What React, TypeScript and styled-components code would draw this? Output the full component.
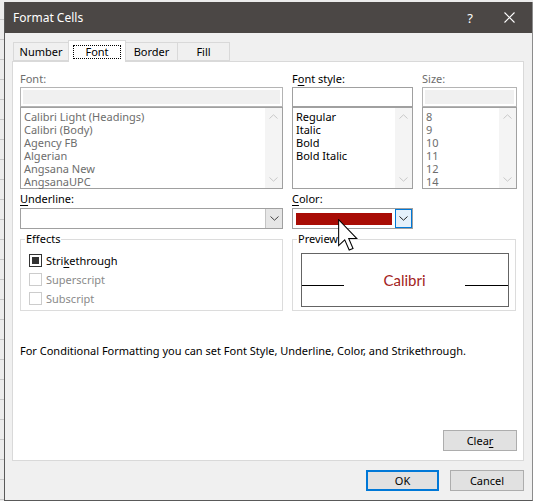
import React from 'react';
import styled, { createGlobalStyle } from 'styled-components';

const GlobalStyle = createGlobalStyle`
  html, body {
    margin: 0;
    padding: 0;
  }
  body {
    width: 533px;
    height: 501px;
    overflow: hidden;
    background-color: #ececec;
    background-image: repeating-linear-gradient(to bottom, transparent 0, transparent 19px, #c8c8c8 19px, #c8c8c8 20px);
    font-family: "Noto Sans", "Open Sans", sans-serif;
    font-size: 11px;
    color: #000;
  }
`;

const Page = styled.div`
  position: relative;
  width: 533px;
  height: 501px;
  padding-top: 2px;
  box-sizing: border-box;
`;

const Dialog = styled.div`
  margin-left: 4px;
  width: 529px;
  height: 499px;
  box-sizing: border-box;
  border-left: 1px solid #595959;
  border-bottom: 1px solid #595959;
  border-right: 1px solid #8c8c8c;
  background: #f0f0f0;
  display: flex;
  flex-direction: column;
`;

const TitleBar = styled.div`
  height: 31px;
  flex-shrink: 0;
  background: #4b4745;
  color: #fff;
  display: flex;
  align-items: center;
  padding-left: 8px;
  font-size: 12px;
`;

const Title = styled.div`
  flex: 1;
`;

const TitleButton = styled.div<{ $w: number }>`
  width: ${(p) => p.$w}px;
  height: 31px;
  display: flex;
  align-items: center;
  justify-content: center;
  font-size: 13px;
`;

const Body = styled.div`
  flex: 1;
  display: flex;
  flex-direction: column;
  padding: 7px 8px 0 7px;
`;

const TabRow = styled.div`
  height: 21px;
  display: flex;
  align-items: flex-end;
  padding-left: 1px;
  position: relative;
  z-index: 1;
`;

const Tab = styled.div<{ $w: number; $active?: boolean }>`
  width: ${(p) => p.$w}px;
  height: ${(p) => (p.$active ? 22 : 19)}px;
  box-sizing: border-box;
  margin-left: -1px;
  margin-bottom: ${(p) => (p.$active ? -1 : 0)}px;
  border: 1px solid #d9d9d9;
  border-bottom: ${(p) => (p.$active ? 'none' : '1px solid #d9d9d9')};
  background: ${(p) => (p.$active ? '#fff' : '#f0f0f0')};
  display: flex;
  align-items: ${(p) => (p.$active ? 'flex-start' : 'center')};
  justify-content: center;
  padding-top: ${(p) => (p.$active ? 4 : 0)}px;
  &:first-child {
    margin-left: 0;
  }
`;

const FocusText = styled.span`
  border: 1px dotted #000;
  padding: 0 11px;
  line-height: 12px;
`;

const Panel = styled.div`
  height: 400px;
  box-sizing: border-box;
  border: 1px solid #d9d9d9;
  background: #fff;
  padding: 8px 6px 9px 7px;
  display: flex;
  flex-direction: column;
`;

const FieldGrid = styled.div`
  display: grid;
  grid-template-columns: 263px 121px 95px;
  column-gap: 9px;
`;

const Field = styled.div`
  display: flex;
  flex-direction: column;
`;

const Label = styled.div<{ $disabled?: boolean; $h?: number }>`
  height: ${(p) => p.$h ?? 17}px;
  line-height: ${(p) => p.$h ?? 17}px;
  color: ${(p) => (p.$disabled ? '#6d6d6d' : '#000')};
  white-space: nowrap;
`;

const Key = styled.span`
  text-decoration: underline;
  text-underline-offset: 2px;
`;

const TextBox = styled.div<{ $disabled?: boolean }>`
  height: 20px;
  box-sizing: border-box;
  border: 1px solid ${(p) => (p.$disabled ? '#b4b4b4' : '#a0a0a0')};
  background: ${(p) => (p.$disabled ? '#f0f0f0' : '#fff')};
  box-shadow: inset 0 0 0 2px #fff;
`;

const ListBox = styled.div`
  height: 82px;
  box-sizing: border-box;
  border: 1px solid #a0a0a0;
  display: flex;
`;

const ListItems = styled.div<{ $disabled?: boolean }>`
  flex: 1;
  padding: 2px 0 0 3px;
  color: ${(p) => (p.$disabled ? '#6d6d6d' : '#000')};
`;

const ListItem = styled.div`
  height: 13px;
  line-height: 13px;
  white-space: nowrap;
`;

const ScrollBar = styled.div`
  width: 17px;
  background: #f4f4f4;
  display: flex;
  flex-direction: column;
  justify-content: space-between;
  align-items: center;
  padding: 6px 0;
`;

const DropDown = styled.div`
  height: 21px;
  box-sizing: border-box;
  border: 1px solid #a0a0a0;
  background: #fff;
  display: flex;
  align-items: stretch;
`;

const DropValue = styled.div`
  flex: 1;
  display: flex;
  align-items: center;
  padding: 0 3px;
`;

const Swatch = styled.div<{ $color: string }>`
  flex: 1;
  height: 12px;
  background: ${(p) => p.$color};
`;

const DropButton = styled.div<{ $hover?: boolean }>`
  width: 17px;
  box-sizing: border-box;
  background: ${(p) => (p.$hover ? '#e5f1fb' : '#e6e6e6')};
  border: ${(p) => (p.$hover ? '1px solid #0078d7' : 'none')};
  border-left: 1px solid ${(p) => (p.$hover ? '#0078d7' : '#c4c4c4')};
  display: flex;
  align-items: center;
  justify-content: center;
`;

const GroupRow = styled.div`
  display: grid;
  grid-template-columns: 263px 224px;
  column-gap: 9px;
  margin-top: 10px;
`;

const Group = styled.div`
  position: relative;
  height: 72px;
  box-sizing: border-box;
  border: 1px solid #dcdcdc;
`;

const GroupTitle = styled.div`
  position: absolute;
  top: -9px;
  left: 4px;
  padding: 0 1px;
  background: #fff;
  line-height: 16px;
`;

const CheckList = styled.div`
  padding: 11px 0 0 8px;
`;

const CheckRow = styled.div<{ $disabled?: boolean }>`
  height: 19px;
  display: flex;
  align-items: center;
  gap: 4px;
  color: ${(p) => (p.$disabled ? '#8a8a8a' : '#000')};
`;

const CheckBox = styled.div<{ $checked?: boolean; $disabled?: boolean }>`
  width: 13px;
  height: 13px;
  box-sizing: border-box;
  border: 1px solid ${(p) => (p.$disabled ? '#cccccc' : '#333')};
  background: #fff;
  display: flex;
  align-items: center;
  justify-content: center;
  &::after {
    content: '';
    display: ${(p) => (p.$checked ? 'block' : 'none')};
    width: 7px;
    height: 7px;
    background: #333;
  }
`;

const PreviewArea = styled.div`
  padding: 13px 0 0 8px;
`;

const PreviewBox = styled.div`
  width: 208px;
  height: 54px;
  box-sizing: border-box;
  border: 1px solid #646464;
  display: flex;
  align-items: center;
  justify-content: space-between;
`;

const PreviewLine = styled.div<{ $w: number }>`
  width: ${(p) => p.$w}px;
  height: 1px;
  background: #000;
  margin-top: 11px;
`;

const PreviewText = styled.div<{ $color: string }>`
  font-family: Lato, "Noto Sans", sans-serif;
  font-size: 15px;
  color: ${(p) => p.$color};
`;

const Note = styled.div`
  margin-top: 32px;
  line-height: 16px;
  white-space: nowrap;
`;

const PanelFooter = styled.div`
  margin-top: auto;
  display: flex;
  justify-content: flex-end;
`;

const Button = styled.div<{ $default?: boolean }>`
  width: ${(p) => (p.$default ? 73 : 74)}px;
  height: 21px;
  box-sizing: border-box;
  border: ${(p) => (p.$default ? '2px solid #0078d7' : '1px solid #adadad')};
  background: #e1e1e1;
  display: flex;
  align-items: center;
  justify-content: center;
`;

const Footer = styled.div`
  margin-top: 9px;
  display: flex;
  justify-content: flex-end;
  gap: 11px;
`;

const Cursor = styled.svg`
  position: absolute;
  left: 338px;
  top: 219px;
`;

const Chevron = ({ up, color = '#a6a6a6' }: { up?: boolean; color?: string }) => (
  <svg width="9" height="5" viewBox="0 0 9 5">
    <path
      d={up ? 'M0.5 4.5 L4.5 0.8 L8.5 4.5' : 'M0.5 0.5 L4.5 4.2 L8.5 0.5'}
      fill="none"
      stroke={color}
      strokeWidth="1"
    />
  </svg>
);

const fonts = ['Calibri Light (Headings)', 'Calibri (Body)', 'Agency FB', 'Algerian', 'Angsana New', 'AngsanaUPC'];
const styles = ['Regular', 'Italic', 'Bold', 'Bold Italic'];
const sizes = ['8', '9', '10', '11', '12', '14'];

const List = ({ items, disabled }: { items: string[]; disabled?: boolean }) => (
  <ListBox>
    <ListItems $disabled={disabled}>
      {items.map((i) => (
        <ListItem key={i}>{i}</ListItem>
      ))}
    </ListItems>
    <ScrollBar>
      <Chevron up color="#c8c8c8" />
      <Chevron color="#c8c8c8" />
    </ScrollBar>
  </ListBox>
);

const App = () => (
  <>
    <GlobalStyle />
    <Page>
      <Dialog>
        <TitleBar>
          <Title>Format Cells</Title>
          <TitleButton $w={32}>?</TitleButton>
          <TitleButton $w={46}>
            <svg width="11" height="11" viewBox="0 0 11 11">
              <path d="M0.5 0.5 L10.5 10.5 M10.5 0.5 L0.5 10.5" stroke="#fff" strokeWidth="1.1" />
            </svg>
          </TitleButton>
        </TitleBar>
        <Body>
          <TabRow>
            <Tab $w={56}>Number</Tab>
            <Tab $w={58} $active>
              <FocusText>Font</FocusText>
            </Tab>
            <Tab $w={53}>Border</Tab>
            <Tab $w={53}>Fill</Tab>
          </TabRow>
          <Panel>
            <FieldGrid>
              <Field>
                <Label $disabled>Font:</Label>
                <TextBox $disabled />
                <List items={fonts} disabled />
              </Field>
              <Field>
                <Label>
                  F<Key>o</Key>nt style:
                </Label>
                <TextBox />
                <List items={styles} />
              </Field>
              <Field>
                <Label $disabled>Size:</Label>
                <TextBox $disabled />
                <List items={sizes} disabled />
              </Field>
              <Field>
                <Label $h={19}>
                  <Key>U</Key>nderline:
                </Label>
                <DropDown>
                  <DropValue />
                  <DropButton>
                    <Chevron color="#444" />
                  </DropButton>
                </DropDown>
              </Field>
              <Field>
                <Label $h={19}>
                  <Key>C</Key>olor:
                </Label>
                <DropDown>
                  <DropValue>
                    <Swatch $color="#a80c05" />
                  </DropValue>
                  <DropButton $hover>
                    <Chevron color="#222" />
                  </DropButton>
                </DropDown>
              </Field>
            </FieldGrid>
            <GroupRow>
              <Group>
                <GroupTitle>Effects</GroupTitle>
                <CheckList>
                  <CheckRow>
                    <CheckBox $checked />
                    <span>
                      Stri<Key>k</Key>ethrough
                    </span>
                  </CheckRow>
                  <CheckRow $disabled>
                    <CheckBox $disabled />
                    <span>Superscript</span>
                  </CheckRow>
                  <CheckRow $disabled>
                    <CheckBox $disabled />
                    <span>Subscript</span>
                  </CheckRow>
                </CheckList>
              </Group>
              <Group>
                <GroupTitle>Preview</GroupTitle>
                <PreviewArea>
                  <PreviewBox>
                    <PreviewLine $w={42} />
                    <PreviewText $color="#a3231c">Calibri</PreviewText>
                    <PreviewLine $w={43} />
                  </PreviewBox>
                </PreviewArea>
              </Group>
            </GroupRow>
            <Note>For Conditional Formatting you can set Font Style, Underline, Color, and Strikethrough.</Note>
            <PanelFooter>
              <Button>
                Clea<Key>r</Key>
              </Button>
            </PanelFooter>
          </Panel>
          <Footer>
            <Button $default>OK</Button>
            <Button>Cancel</Button>
          </Footer>
        </Body>
      </Dialog>
      <Cursor width="20" height="32" viewBox="0 0 12.5 20">
        <path
          d="M0.4 0.4 L0.4 16.6 L4.2 13 L7 19.4 L9.4 18.4 L6.7 12.2 L11.8 12.2 Z"
          fill="#fff"
          stroke="#000"
          strokeWidth="0.65"
          strokeLinejoin="miter"
        />
      </Cursor>
    </Page>
  </>
);

export default App;
